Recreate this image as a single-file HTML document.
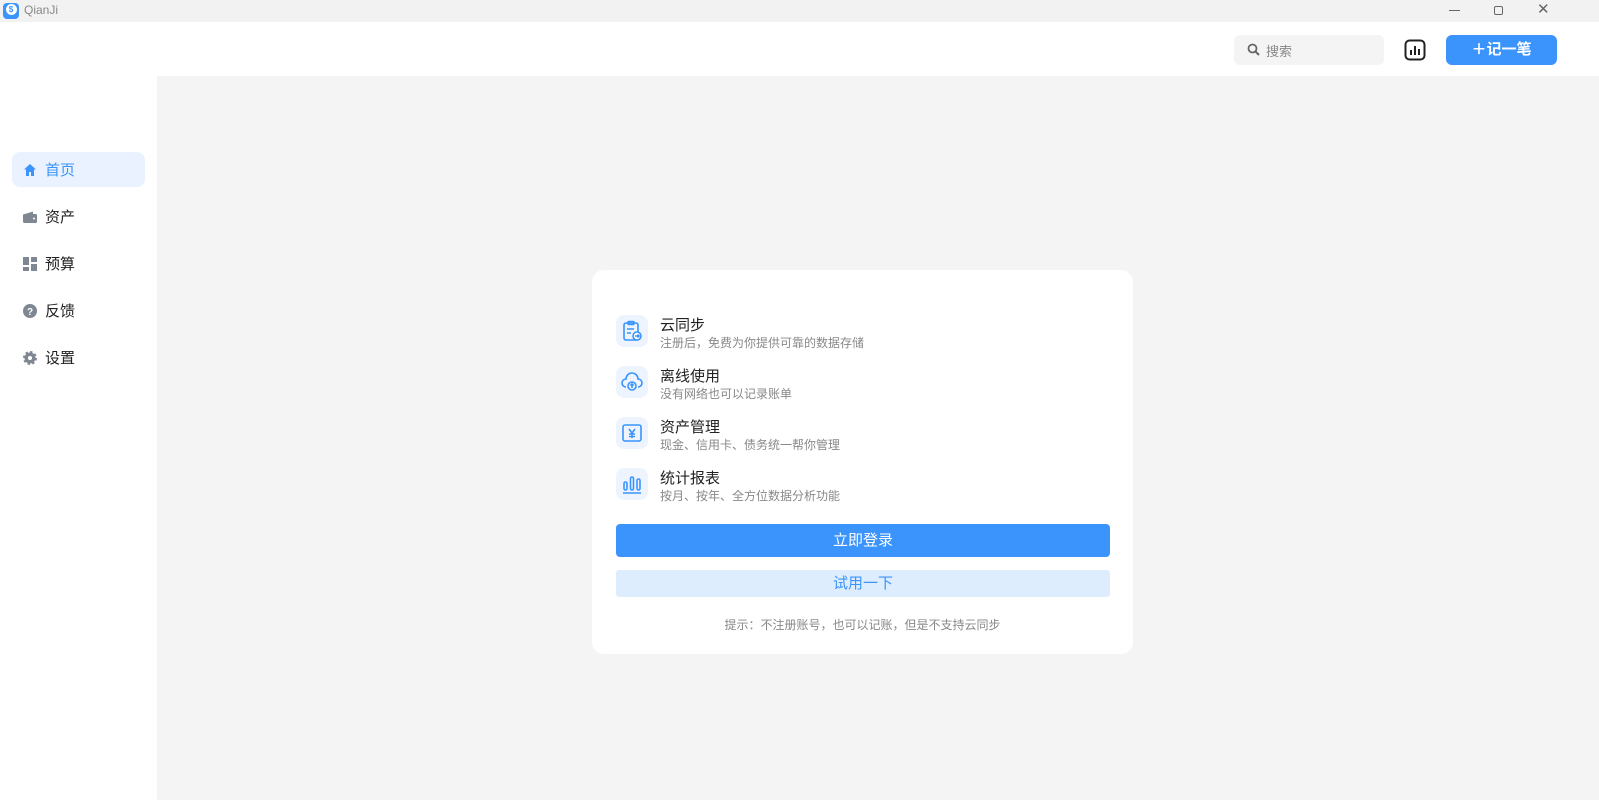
<!DOCTYPE html>
<html><head><meta charset="utf-8"><style>
*{margin:0;padding:0;box-sizing:border-box}
body{width:1599px;height:800px;position:relative;overflow:hidden;background:#fff;font-family:"Liberation Sans","Noto Sans CJK SC",sans-serif;color:#222}
.abs{position:absolute}
.title{left:0;top:0;width:1599px;height:22px;background:#f2f2f2}
.main{left:157px;top:76px;width:1442px;height:724px;background:#f4f4f4}
.nav{left:12px;width:133px;height:35px;border-radius:8px;display:flex;align-items:center;padding-left:11px;font-size:15px;color:#222}
.nav svg{margin-right:8px}
.card{left:592px;top:270px;width:541px;height:384px;background:#fff;border-radius:12px}
.ib{left:616px;width:32px;height:32px;border-radius:8px;background:#eef4fe;display:flex;align-items:center;justify-content:center}
.t1{left:660px;font-size:15px;color:#222}
.t2{left:660px;font-size:12px;color:#888}
</style></head><body>
<div class="abs title"></div>
<div class="abs" style="left:3px;top:3px;width:16px;height:16px;border-radius:4px;background:#3a94fc;color:#fff;font-size:10px;font-weight:bold;text-align:center;line-height:16px"><span style="display:inline-block;width:11px;height:11px;border-radius:50%;background:#fff;color:#3a94fc;line-height:11px;font-size:8px;vertical-align:1px">$</span></div>
<div class="abs" style="left:24px;top:3px;font-size:12px;color:#888">QianJi</div>
<div class="abs" style="left:1449px;top:10px;width:11px;height:1px;background:#666"></div>
<div class="abs" style="left:1494px;top:6px;width:9px;height:9px;border:1px solid #666;border-radius:2px"></div>
<div class="abs" style="left:1537px;top:3px;font-size:15px;color:#666;line-height:14px">✕</div>

<div class="abs" style="left:1234px;top:35px;width:150px;height:30px;background:#f4f4f4;border-radius:6px"></div>
<svg class="abs" style="left:1247px;top:43px" width="13" height="13" viewBox="0 0 13 13"><circle cx="5.5" cy="5.5" r="4" fill="none" stroke="#666" stroke-width="1.8"/><path d="M8.5 8.5L12 12" stroke="#666" stroke-width="2"/></svg>
<div class="abs" style="left:1266px;top:41px;font-size:13px;color:#888">搜索</div>
<svg class="abs" style="left:1404px;top:39px" width="22" height="22" viewBox="0 0 22 22"><rect x="1.5" y="1.5" width="19" height="19" rx="4" fill="none" stroke="#222" stroke-width="2"/><path d="M7 11v5M11 7v9M15 10v6" stroke="#222" stroke-width="2"/></svg>
<div class="abs" style="left:1446px;top:35px;width:111px;height:30px;background:#3a94fc;border-radius:6px;color:#fff;font-size:15px;font-weight:bold;text-align:center;line-height:30px">＋记一笔</div>

<div class="abs main"></div>
<div class="abs nav" style="top:152px;background:#e9f2fe;color:#3a94fc"><svg width="14" height="14" viewBox="0 0 14 14"><path d="M7 1L1 6.5h2V13h3V9h2v4h3V6.5h2z" fill="#3a94fc"/></svg>首页</div>
<div class="abs nav" style="top:199px"><svg width="14" height="14" viewBox="0 0 14 14"><rect x="0" y="4" width="14" height="9" rx="1.5" fill="#7f8792"/><path d="M2 4L10 1.5V4z" fill="#7f8792"/><circle cx="11" cy="8.5" r="1" fill="#fff"/></svg>资产</div>
<div class="abs nav" style="top:246px"><svg width="14" height="14" viewBox="0 0 14 14"><rect x="0" y="0" width="6" height="8" fill="#7f8792"/><rect x="8" y="0" width="6" height="5" fill="#7f8792"/><rect x="0" y="10" width="6" height="4" fill="#7f8792"/><rect x="8" y="7" width="6" height="7" fill="#7f8792"/></svg>预算</div>
<div class="abs nav" style="top:293px"><svg width="14" height="14" viewBox="0 0 14 14"><circle cx="7" cy="7" r="7" fill="#7f8792"/><text x="7" y="11" font-size="10" font-weight="bold" fill="#fff" text-anchor="middle" font-family="Liberation Sans">?</text></svg>反馈</div>
<div class="abs nav" style="top:340px"><svg width="14" height="14" viewBox="0 0 14 14"><circle cx="7" cy="7" r="5.5" fill="#7f8792" stroke="#7f8792" stroke-width="3" stroke-dasharray="2.2 2.1"/><circle cx="7" cy="7" r="2" fill="#fff"/></svg>设置</div>

<div class="abs card"></div>
<div class="abs ib" style="top:315px"><svg width="22" height="22" viewBox="0 0 22 22" fill="none" stroke="#3a94fc" stroke-width="1.6"><rect x="3" y="3" width="14" height="17" rx="2"/><rect x="7" y="1.5" width="6" height="3" rx="1"/><path d="M6 9h7M6 13h4"/><circle cx="16" cy="16" r="4" fill="#fff"/><path d="M14 16h4M16.5 14.5l1.5 1.5-1.5 1.5"/></svg></div>
<div class="abs ib" style="top:366px"><svg width="24" height="22" viewBox="0 0 24 22" fill="none" stroke="#3a94fc" stroke-width="1.6"><path d="M6 16a4 4 0 0 1 0-8 6 6 0 0 1 12 0 4 4 0 0 1 0 8"/><circle cx="12" cy="15" r="4"/><path d="M12 17v-4M10.5 14.5L12 13l1.5 1.5"/></svg></div>
<div class="abs ib" style="top:417px"><svg width="22" height="22" viewBox="0 0 22 22" fill="none" stroke="#3a94fc" stroke-width="1.6"><rect x="2" y="3" width="18" height="16" rx="2"/><path d="M8 7l3 4 3-4M11 11v5M8 12h6M8 14.5h6"/></svg></div>
<div class="abs ib" style="top:468px"><svg width="22" height="22" viewBox="0 0 22 22" fill="none" stroke="#3a94fc" stroke-width="1.6"><rect x="3" y="9" width="3" height="8" rx="1.5"/><rect x="9.5" y="4" width="3" height="13" rx="1.5"/><rect x="16" y="6" width="3" height="11" rx="1.5"/><path d="M2 20h18"/></svg></div>
<div class="abs t1" style="top:314px">云同步</div><div class="abs t2" style="top:334px">注册后，免费为你提供可靠的数据存储</div>
<div class="abs t1" style="top:365px">离线使用</div><div class="abs t2" style="top:385px">没有网络也可以记录账单</div>
<div class="abs t1" style="top:416px">资产管理</div><div class="abs t2" style="top:436px">现金、信用卡、债务统一帮你管理</div>
<div class="abs t1" style="top:467px">统计报表</div><div class="abs t2" style="top:487px">按月、按年、全方位数据分析功能</div>
<div class="abs" style="left:616px;top:524px;width:494px;height:33px;background:#3a94fc;border-radius:4px;color:#fff;font-size:15px;text-align:center;line-height:33px">立即登录</div>
<div class="abs" style="left:616px;top:570px;width:494px;height:27px;background:#deedfd;border-radius:3px;color:#3a94fc;font-size:15px;text-align:center;line-height:27px">试用一下</div>
<div class="abs" style="left:592px;width:541px;top:616px;font-size:12px;color:#888;text-align:center">提示：不注册账号，也可以记账，但是不支持云同步</div>
</body></html>
